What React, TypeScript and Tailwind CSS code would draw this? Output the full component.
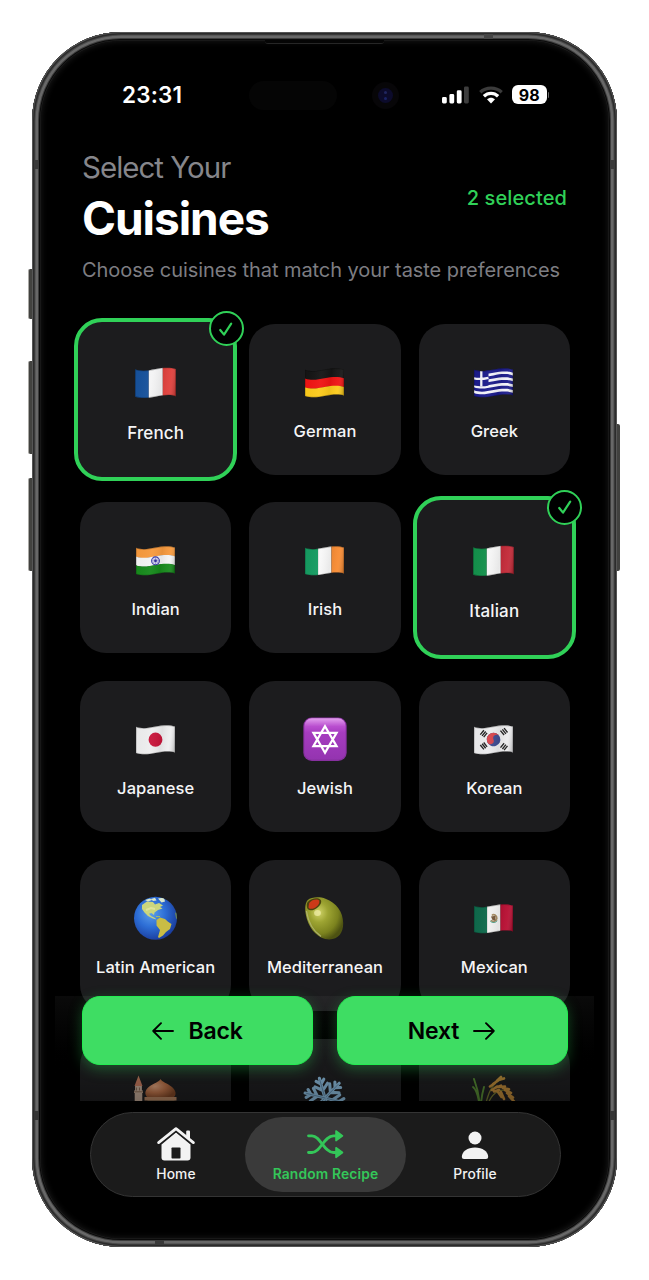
import type { ReactNode } from "react";

const TOP = "C9 12.2 15 11 22 9.6 S36 7.6 41.5 9.6";
const FLAG = `M2.5 9.8 ${TOP} V35.6 C36 33.6 29 34.6 22 36 S9 38.2 2.5 36 Z`;

/* Band of the waving cloth between two vertical offsets from its top edge. */
function band(a: number, b: number) {
  return `M2.5 ${9.8 + a} C9 ${12.2 + a} 15 ${11 + a} 22 ${9.6 + a} S36 ${7.6 + a} 41.5 ${9.6 + a} V${9.6 + b} C36 ${7.6 + b} 29 ${8.2 + b} 22 ${9.6 + b} S9 ${12.2 + b} 2.5 ${9.8 + b} Z`;
}

function Flag({ id, children }: { id: string; children: ReactNode }) {
  return (
    <svg viewBox="0.5 0 44 44" className="size-full">
      <defs>
        <clipPath id={`${id}-clip`}>
          <path d={FLAG} />
        </clipPath>
        <linearGradient id={`${id}-shade`} x1="0" x2="1" y1="0" y2="0.12">
          <stop offset="0" stopColor="#000" stopOpacity="0.16" />
          <stop offset="0.14" stopColor="#000" stopOpacity="0.02" />
          <stop offset="0.45" stopColor="#fff" stopOpacity="0.04" />
          <stop offset="0.68" stopColor="#000" stopOpacity="0.06" />
          <stop offset="0.86" stopColor="#fff" stopOpacity="0.04" />
          <stop offset="1" stopColor="#000" stopOpacity="0.2" />
        </linearGradient>
      </defs>
      <g clipPath={`url(#${id}-clip)`}>
        {children}
        <rect width="44" height="44" fill={`url(#${id}-shade)`} />
        <path d={FLAG} fill="none" stroke="#000" strokeOpacity="0.25" strokeWidth="1.2" />
      </g>
    </svg>
  );
}

function Vertical({ id, a, b, c, children }: { id: string; a: string; b: string; c: string; children?: ReactNode }) {
  return (
    <Flag id={id}>
      <rect width="15.6" height="44" fill={a} />
      <rect x="15.6" width="13.4" height="44" fill={b} />
      <rect x="29" width="15" height="44" fill={c} />
      {children}
    </Flag>
  );
}

function Horizontal({ id, a, b, c, children }: { id: string; a: string; b: string; c: string; children?: ReactNode }) {
  return (
    <Flag id={id}>
      <path d={band(-1, 9)} fill={a} />
      <path d={band(8.7, 17.6)} fill={b} />
      <path d={band(17.4, 28)} fill={c} />
      {children}
    </Flag>
  );
}

const icons: Record<string, ReactNode> = {
  French: <Vertical id="fr" a="#17529c" b="#f4f4f5" c="#e0403c" />,
  German: <Horizontal id="de" a="#151515" b="#f01414" c="#fccb1c" />,
  Greek: (
    <Flag id="gr">
      <rect width="44" height="44" fill="#1c1c8c" />
      {[2.9, 8.7, 14.5, 20.3].map((y) => (
        <path key={y} d={band(y + 0.2, y + 2.9)} fill="#f3f3fa" />
      ))}
      <path d="M2 8 L17 8 V25.5 C12 26.8 8 26.5 2 25.5Z" fill="#1c1c8c" />
      <path d="M9.8 10 V26.5 M2 18.3 C8 19.7 12 19 17 17.8" stroke="#f3f3fa" strokeWidth="2.3" fill="none" />
    </Flag>
  ),
  Indian: (
    <Horizontal id="in" a="#f79a3e" b="#f4f4f4" c="#178a1c">
      <circle cx="22" cy="22.8" r="3.9" fill="#dcdcf2" stroke="#3a38a8" strokeWidth="1.1" />
      <path d="M22 19 V26.6 M18.2 22.8 H25.8 M19.3 20.1 L24.7 25.5 M24.7 20.1 L19.3 25.5" stroke="#6462ba" strokeWidth="0.5" />
      <circle cx="22" cy="22.8" r="1.3" fill="#2d2a9c" />
    </Horizontal>
  ),
  Irish: <Vertical id="ie" a="#169c62" b="#f8f8f8" c="#f88c34" />,
  Italian: <Vertical id="it" a="#14914c" b="#f6f6f6" c="#c32a38" />,
  Japanese: (
    <Flag id="jp">
      <rect width="44" height="44" fill="#eeeeef" />
      <ellipse cx="22" cy="22.7" rx="6.9" ry="7.1" fill="#c8153a" />
    </Flag>
  ),
  Jewish: (
    <svg viewBox="0 0 44 44" className="size-full">
      <defs>
        <linearGradient id="jw" x2="0" y2="1">
          <stop offset="0" stopColor="#e3a0ee" />
          <stop offset="0.2" stopColor="#b94ecf" />
          <stop offset="0.35" stopColor="#a63cc0" />
          <stop offset="1" stopColor="#9434b0" />
        </linearGradient>
      </defs>
      <rect x="0.3" y="0.6" width="43.4" height="43.4" rx="8.5" fill="#87309f" />
      <rect x="1.4" y="1.2" width="41.2" height="41.2" rx="7.5" fill="url(#jw)" />
      <path d="M22 9.3 L33.6 29.2 H10.4 Z M22 35.8 L10.4 15.9 H33.6 Z" fill="none" stroke="#fff" strokeWidth="2.2" />
    </svg>
  ),
  Korean: (
    <Flag id="kr">
      <rect width="44" height="44" fill="#ececee" />
      <g transform="translate(22 22.5) rotate(-22) scale(-1 1)">
        <circle r="6.8" fill="#3f4c92" />
        <path d="M-6.8 0 A6.8 6.8 0 0 1 6.8 0 A3.4 3.4 0 0 1 0 0 A3.4 3.4 0 0 0 -6.8 0Z" fill="#d8454c" />
      </g>
      <g stroke="#222" strokeWidth="1.35">
        <path d="M8.8 17.6 L12.4 13.2 M10.6 18.9 L14.2 14.5 M12.2 20.2 L15.6 15.9" />
        <path d="M8.8 28 L12.4 32.4 M10.6 26.8 L14.2 31.2 M12.2 25.5 L15.6 29.9" />
        <path d="M29 13.6 L32.6 18 M30.9 12.4 L34.4 16.8 M32.6 11.2 L36 15.5" />
        <path d="M29 30.6 L32.6 26.2 M30.9 32 L34.4 27.6 M32.6 33.2 L36 28.8" />
      </g>
    </Flag>
  ),
  "Latin American": (
    <svg viewBox="0 0 44 44" className="size-full">
      <defs>
        <radialGradient id="globe" cx="0.4" cy="0.38" r="0.65">
          <stop offset="0" stopColor="#5ea0ea" />
          <stop offset="0.5" stopColor="#2d6ed6" />
          <stop offset="1" stopColor="#1a3c9c" />
        </radialGradient>
        <clipPath id="globe-clip">
          <circle cx="21.5" cy="22.3" r="21.5" />
        </clipPath>
      </defs>
      <circle cx="21.5" cy="22.3" r="21.5" fill="url(#globe)" />
      <g clipPath="url(#globe-clip)">
        <path d="M8 9 L13 5.4 L19 6 L21 8.5 L25 7 L29 9.5 L26 11 L28.5 12.5 L24 14 L20.5 16.5 L20 19 L17.5 17 L15 17.8 L17 20 L21 22 L22.5 23.5 L19 22.5 L14 20 L10.5 16.5 L8 13Z" fill="#cbd67d" />
        <path d="M22.5 24 L26 21.6 L31 23 L34 25.8 L37.5 28 L36 33 L32 36 L29 39.5 L25 42 L24 41 L26 34 L22.5 29.5Z" fill="#c9bd45" />
        <path d="M11 4 L16 2.5 L18 4 L14 5.5Z M17 3 L21 1.8 L22.5 4.5 L19 5Z M24 2.5 L30 1.5 L31 5.5 L27.5 6.5Z" fill="#d8e6cc" />
        <path d="M41 17 L44 15 V25 L42 22Z" fill="#6d8652" />
        <path d="M22 20.5 L26 20.6" stroke="#a9be60" />
        <path d="M12 14 L17 12 L21 13" stroke="#eff0b1" strokeWidth="2" fill="none" opacity=".55" />
      </g>
    </svg>
  ),
  Mediterranean: (
    <svg viewBox="0.5 0 44 44" className="size-full">
      <defs>
        <radialGradient id="olive" cx="0.36" cy="0.36" r="0.68">
          <stop offset="0" stopColor="#d0d368" />
          <stop offset="0.35" stopColor="#9da432" />
          <stop offset="0.75" stopColor="#7b821e" />
          <stop offset="1" stopColor="#4d5212" />
        </radialGradient>
      </defs>
      <path d="M5 4.2 C9 1 17 .4 23 2.8 C34 7 40.5 16 40.7 27 C40.9 37 35.5 43.6 26.5 43.4 C16 43 8 34.5 4.4 23 C2.2 15 2 8 5 4.2Z" fill="url(#olive)" />
      <path d="M3.9 15 C5.5 25 10.5 35 18.5 40.4" stroke="#b9bc80" strokeWidth="1.3" fill="none" opacity=".75" />
      <path d="M5.2 5.9 C9 2.1 15.2 1.4 17.8 3.6 C20.5 6 17 11.5 12 13.4 C8 15 5.2 14.3 4.6 11.8 C4.2 9.8 4 7.2 5.2 5.9Z" fill="#4b430f" />
      <path d="M6.7 7 C9.5 3.4 15 2.8 16.6 4.6 C17.5 7 15.6 10.5 11.6 12.2 C9 13.2 6.4 13 6 11.2Z" fill="#cc3a18" />
      <ellipse cx="15" cy="17" rx="3.4" ry="3" fill="#f2f0ad" opacity=".7" />
    </svg>
  ),
  Mexican: (
    <Vertical id="mx" a="#0f6a4c" b="#f1f1f0" c="#b80f33">
      <path d="M20.5 19.5 C22 17.6 25.5 19 25.3 22.3 C25 25.3 21.5 26.2 19.3 24.4" fill="none" stroke="#a58b62" strokeWidth="1.7" />
      <path d="M19.5 20.5 L24 19.8 L24 24.6 L21 24Z" fill="#76583a" />
      <path d="M18.8 25.2 C21 27.2 24 26.8 25.8 24.8" fill="none" stroke="#4da087" />
    </Vertical>
  ),
  Moroccan: (
    <svg viewBox="0.5 0.5 44 44" className="size-full">
      <defs>
        <radialGradient id="dome" cx="0.32" cy="0.4" r="0.7">
          <stop offset="0" stopColor="#e0a47e" />
          <stop offset="0.5" stopColor="#bd7248" />
          <stop offset="1" stopColor="#7f4524" />
        </radialGradient>
      </defs>
      <path d="M5 1 L9 11.5 H1Z" fill="#c77a5e" />
      <path d="M1.6 11.5 H8.4 V16 H9.5 V18.5 H8.8 V44 H1.2 V18.5 H.5 V16 H1.6Z" fill="#c5ac98" />
      <path d="M3 13 V16 M6 13 V16 M.5 17.3 H9.5" stroke="#85664f" strokeWidth=".9" />
      <path d="M27 4.5 C28.3 7.6 34 8.6 38.5 12.5 C43 16.6 43 20.5 40 23 H14 C10.5 19.4 11.5 15.5 15.5 12.2 C20 8.6 25.8 7.6 27 4.5Z" fill="url(#dome)" />
      <path d="M11 22.5 H43 V26 H11Z" fill="#b98763" />
      <path d="M14 26 H41 V44 H14Z" fill="#a3805f" />
    </svg>
  ),
  Nordic: (
    <svg viewBox="0 0 44 44" className="size-full" fill="none" stroke="#8fc0e2" strokeWidth="3.1" strokeLinecap="round">
      {[0, 60, 120, 180, 240, 300].map((r) => (
        <g key={r} transform={`rotate(${r - 16} 22 23)`}>
          <path d="M22 23 V2.5 M22 8.6 L18 4.6 M22 8.6 L26 4.6 M22 15.2 L15.5 9.5 M22 15.2 L28.5 9.5" />
          <path d="M22 23 V4" stroke="#537c9d" strokeWidth=".7" />
        </g>
      ))}
    </svg>
  ),
  Asian: (
    <svg viewBox="0 0 44 44" className="size-full" fill="none" strokeLinecap="round">
      <path d="M12 44 C13 25 18 9 30 4" stroke="#71752d" strokeWidth="1.3" />
      <path d="M14 44 C14 23 24 12 37 16" stroke="#74772e" strokeWidth="1.3" />
      <path d="M2 4 C5 12 8 24 8 36 M9 42 C8 28 10 19 12 12 M8 35 C7 24 5 15 1 12" stroke="#568a33" strokeWidth="1.9" />
      <path d="M18 11.5 L23 8 M21 9 L26 5.5 M25 5.6 L29 2 M27 4.8 L32 3.4 M20 15 L25 11.5 M24 12.5 L29 10.7 M27 12 L33 11.5 M31 13 L37 14.2 M33 15 L39 18 M35 18 L41 22.5 M37 21 L42.5 27 M22 16.5 L27 15 M26 17 L29.5 22 M29 17 L32 24" stroke="#c08a38" strokeWidth="2.6" />
    </svg>
  ),
};

const cuisines = [
  "French", "German", "Greek",
  "Indian", "Irish", "Italian",
  "Japanese", "Jewish", "Korean",
  "Latin American", "Mediterranean", "Mexican",
];
const selected = ["French", "Italian"];

function Card({ name }: { name: string }) {
  if (selected.includes(name)) {
    return (
      <div className="relative -m-[6px] flex flex-col items-center rounded-[28px] border-4 border-[#30d158] bg-[#1c1c1e] pt-[37px]">
        <div className="size-[46px]">{icons[name]}</div>
        <div className="mt-[18px] text-[17px] leading-5 font-medium tracking-[0.15px] text-[#f5f5f6]">{name}</div>
        <div className="absolute -top-[10.5px] -right-[10.5px] flex size-[35px] items-center justify-center rounded-full border-[2.5px] border-[#30d158] bg-black">
          <svg viewBox="0 0 16 16" className="size-4" fill="none" stroke="#30d158" strokeWidth="2.2" strokeLinecap="round" strokeLinejoin="round">
            <path d="M2.2 9 L6 13.6 L13.2 2.6" />
          </svg>
        </div>
      </div>
    );
  }
  return (
    <div className="flex flex-col items-center rounded-[26px] bg-[#1c1c1e] pt-9">
      <div className="size-11">{icons[name]}</div>
      <div className="mt-[17px] text-[16.5px] leading-5 font-medium tracking-[0.04px] whitespace-nowrap text-[#f5f5f6]">{name}</div>
    </div>
  );
}

function StatusBar() {
  return (
    <div className="mt-[49px] flex h-[29px] shrink-0 items-center">
      <div className="ml-[90px] w-[127px] pb-[2px] text-[22.5px] leading-[27px] font-semibold tracking-[0.2px] text-white">23:31</div>
      <div className="h-[29px] w-[88px] rounded-full bg-[#050505]" />
      <div className="ml-[35px] flex size-[27px] items-center justify-center rounded-full bg-[#070608]">
        <div className="flex size-[15px] flex-col items-center justify-center gap-[3px] rounded-full bg-[#0c0b2b]">
          <div className="size-[3px] rounded-full bg-[#20265f]" />
          <div className="size-[3px] rounded-full bg-[#1a2366]" />
        </div>
      </div>
      <div className="ml-[43px] flex items-center pb-[2px]">
        <svg viewBox="0 0 27 18" className="h-[18px] w-[27px]">
          <rect x="0" y="11" width="4.8" height="6.5" rx="1.4" fill="#fff" />
          <rect x="7.4" y="8" width="4.8" height="9.5" rx="1.4" fill="#fff" />
          <rect x="14.8" y="4.3" width="4.8" height="13.2" rx="1.4" fill="#fff" />
          <rect x="22" y="0.6" width="4.8" height="16.9" rx="1.4" fill="#3d3d3d" />
        </svg>
        <svg viewBox="0 0 24 18" className="ml-[10px] h-[18px] w-6" fill="none" strokeWidth="3.3">
          <path d="M1.3 6.2 C7 .7 17 .7 22.7 6.2" stroke="#3b3b3b" />
          <path d="M4.9 10.2 C9 6.3 15 6.3 19.1 10.2" stroke="#fff" />
          <path d="M8 13.3 C10.3 11.2 13.7 11.2 16 13.3 L12 17.4Z" fill="#fff" />
        </svg>
        <div className="ml-[9px] flex h-[18.5px] w-[34.5px] items-center justify-center rounded-[6px] bg-white text-[16px] leading-none font-bold text-black">98</div>
        <div className="ml-px h-[6px] w-[1.5px] rounded-r-full bg-[#6a6a6a]" />
      </div>
    </div>
  );
}

const actionClass =
  "flex h-[69px] w-[231px] items-center justify-center rounded-[18px] border border-[#22ee50] bg-[#3edd63] pt-[2px] text-[23px] font-semibold tracking-[-0.2px] text-black shadow-[0_4px_14px_rgba(48,209,88,0.34)]";

export default function App() {
  return (
    <div className="flex h-[1280px] w-[649px] bg-white pt-8 pl-8 font-[Inter,'Noto_Sans',sans-serif]">
      <div className="relative flex h-[1215px] w-[585px] flex-col rounded-[89px] bg-black">
        <div className="absolute top-[237px] -left-[4px] h-[50px] w-[5px] rounded-l-[2px] border-l border-[#aaa9a5] bg-[#42423f]" />
        <div className="absolute top-[329px] -left-[4px] h-[93px] w-[5px] rounded-l-[2px] border-l border-[#aaa9a5] bg-[#42423f]" />
        <div className="absolute top-[446px] -left-[4px] h-[93px] w-[5px] rounded-l-[2px] border-l border-[#aaa9a5] bg-[#42423f]" />
        <div className="absolute top-[392px] -right-[3px] h-[147px] w-[4px] rounded-r-[2px] bg-[#41413f]" />
        <div className="pointer-events-none absolute inset-0 rounded-[89px] shadow-[inset_0_0_0_1px_#555555,inset_0_0_0_2.5px_#2b2b2b,inset_0_0_0_3.5px_#484848,inset_0_0_0_6px_#686868,inset_0_0_0_7px_#3c3c3c,inset_0_0_0_8px_#0a0a0a,inset_0_0_0_8.5px_#222222,inset_0_0_6px_9px_#1b1b1b]" />
        <div className="absolute top-[8px] left-[233px] h-[4px] w-[119px] rounded-b-[3px] border-b border-[#262626] bg-[#050505]" />
        <div className="absolute top-[2px] left-[452px] h-[5px] w-[9px] bg-[#454545]" />
        <div className="absolute bottom-[2px] left-[123px] h-[5px] w-[9px] bg-[#393939]" />
        <div className="absolute top-[128px] left-[2px] h-[9px] w-[5px] bg-[#3a3a3a]" />
        <div className="absolute top-[128px] right-[2px] h-[9px] w-[5px] bg-[#3a3a3a]" />
        <div className="absolute bottom-[127px] left-[2px] h-[9px] w-[5px] bg-[#353535]" />
        <div className="absolute right-[2px] bottom-[127px] h-[9px] w-[5px] bg-[#353535]" />

        <StatusBar />

        <header className="mt-[39px] flex h-[135px] shrink-0 flex-col pr-[50px] pl-[50px]">
          <div className="flex items-center justify-between">
            <div>
              <div className="text-[29.5px] leading-9 tracking-[-1px] text-[#86868b]">Select Your</div>
              <h1 className="mt-[7px] text-[46px] leading-[52px] font-bold tracking-[-1.05px] text-white">Cuisines</h1>
            </div>
            <div className="mt-[2px] text-[20px] leading-6 font-medium tracking-[0.1px] text-[#30d158]">2 selected</div>
          </div>
          <p className="mt-[13px] text-[20px] leading-[26px] tracking-[-0.06px] whitespace-nowrap text-[#7d7d82]">
            Choose cuisines that match your taste preferences
          </p>
        </header>

        <main className="relative ml-[23px] h-[817px] w-[539px] shrink-0 overflow-hidden pt-[39.5px] pl-[25px]">
          <div className="grid w-[490px] auto-rows-[151px] grid-cols-3 gap-x-[18px] gap-y-[27.8px]">
            {cuisines.map((name) => (
              <Card key={name} name={name} />
            ))}
            {["Moroccan", "Nordic", "Asian"].map((name) => (
              <div key={name} className="flex justify-center rounded-t-[26px] bg-[#1c1c1e] pt-9">
                <div className="size-11 opacity-90">{icons[name]}</div>
              </div>
            ))}
          </div>
          <div className="absolute inset-x-0 top-[712px] bottom-0 bg-linear-to-b from-[#ffffff0a] via-[#1212120d] to-[#00000050]" />
          <div className="absolute top-[712px] left-[27px] flex gap-[24px]">
            <button className={actionClass}>
              <svg viewBox="0 0 22 18" className="mr-[14px] -mt-[2px] h-[18px] w-[22px]" fill="none" stroke="#000" strokeWidth="1.9" strokeLinecap="round" strokeLinejoin="round">
                <path d="M21 9 H1.2 M9 1.2 L1.2 9 L9 16.8" />
              </svg>
              Back
            </button>
            <button className={actionClass}>
              Next
              <svg viewBox="0 0 22 18" className="-mt-[2px] mr-[2px] ml-[14px] h-[18px] w-[22px]" fill="none" stroke="#000" strokeWidth="1.9" strokeLinecap="round" strokeLinejoin="round">
                <path d="M1 9 H20.8 M13 1.2 L20.8 9 L13 16.8" />
              </svg>
            </button>
          </div>
        </main>

        <nav className="mt-[11px] ml-[58px] flex h-[85px] w-[471px] shrink-0 items-center justify-center rounded-full border border-[#343434] bg-[#1b1b1b] text-[13.8px] font-medium text-[#f2f2f2]">
          <div className="flex h-[75px] w-[149.5px] flex-col items-center pt-[9px]">
            <svg viewBox="0 0 40 36" className="h-9 w-10" fill="#f2f2f2">
              <path d="M5.5 18.5 L20 6.6 L34.5 18.5 V31.5 Q34.5 34.5 31.5 34.5 H8.5 Q5.5 34.5 5.5 31.5Z" />
              <path d="M2.6 16.6 L20 2.6 L37.4 16.6" fill="none" stroke="#1b1b1b" strokeWidth="5.4" />
              <path d="M2.6 16.6 L20 2.6 L37.4 16.6" fill="none" stroke="#f2f2f2" strokeWidth="2.8" strokeLinecap="round" strokeLinejoin="round" />
              <path d="M30.2 5.5 Q30.2 4.5 31.2 4.5 H33 Q34 4.5 34 5.5 V14 L30.2 11Z" />
              <rect x="15.5" y="21.5" width="9" height="11" rx=".8" fill="#1b1b1b" />
            </svg>
            <span className="mt-[2px] leading-5 tracking-[0.15px]">Home</span>
          </div>
          <div className="-mx-[5.75px] flex h-[75px] w-[161px] flex-col items-center rounded-full bg-[#3a3a3a] pt-[9px] font-semibold text-[#34c759]">
            <svg viewBox="0.5 0 40 36" className="h-9 w-10" fill="none" stroke="#34c759" strokeWidth="2.8" strokeLinecap="round" strokeLinejoin="round">
              <path d="M3 9.8 H6.5 C15 9.8 18.5 26.5 28 26.5 H31" />
              <path d="M3 26.5 H6.5 C15 26.5 18.5 9.8 28 9.8 H31" />
              <path d="M30.5 5 L37 9.8 L30.5 14.6Z M30.5 21.7 L37 26.5 L30.5 31.3Z" fill="#34c759" strokeWidth="1.6" />
            </svg>
            <span className="mt-[2px] leading-5 tracking-[0.15px]">Random Recipe</span>
          </div>
          <div className="flex h-[75px] w-[149.5px] flex-col items-center pt-[9px]">
            <svg viewBox="0 0 40 36" className="h-9 w-10" fill="#f2f2f2">
              <circle cx="20" cy="12" r="6.5" />
              <path d="M6.8 31 C6.8 25.5 12.5 21.5 20 21.5 S33.2 25.5 33.2 31 Q33.2 33 31 33 H9 Q6.8 33 6.8 31Z" />
            </svg>
            <span className="mt-[2px] leading-5 tracking-[0.15px]">Profile</span>
          </div>
        </nav>
      </div>
    </div>
  );
}
